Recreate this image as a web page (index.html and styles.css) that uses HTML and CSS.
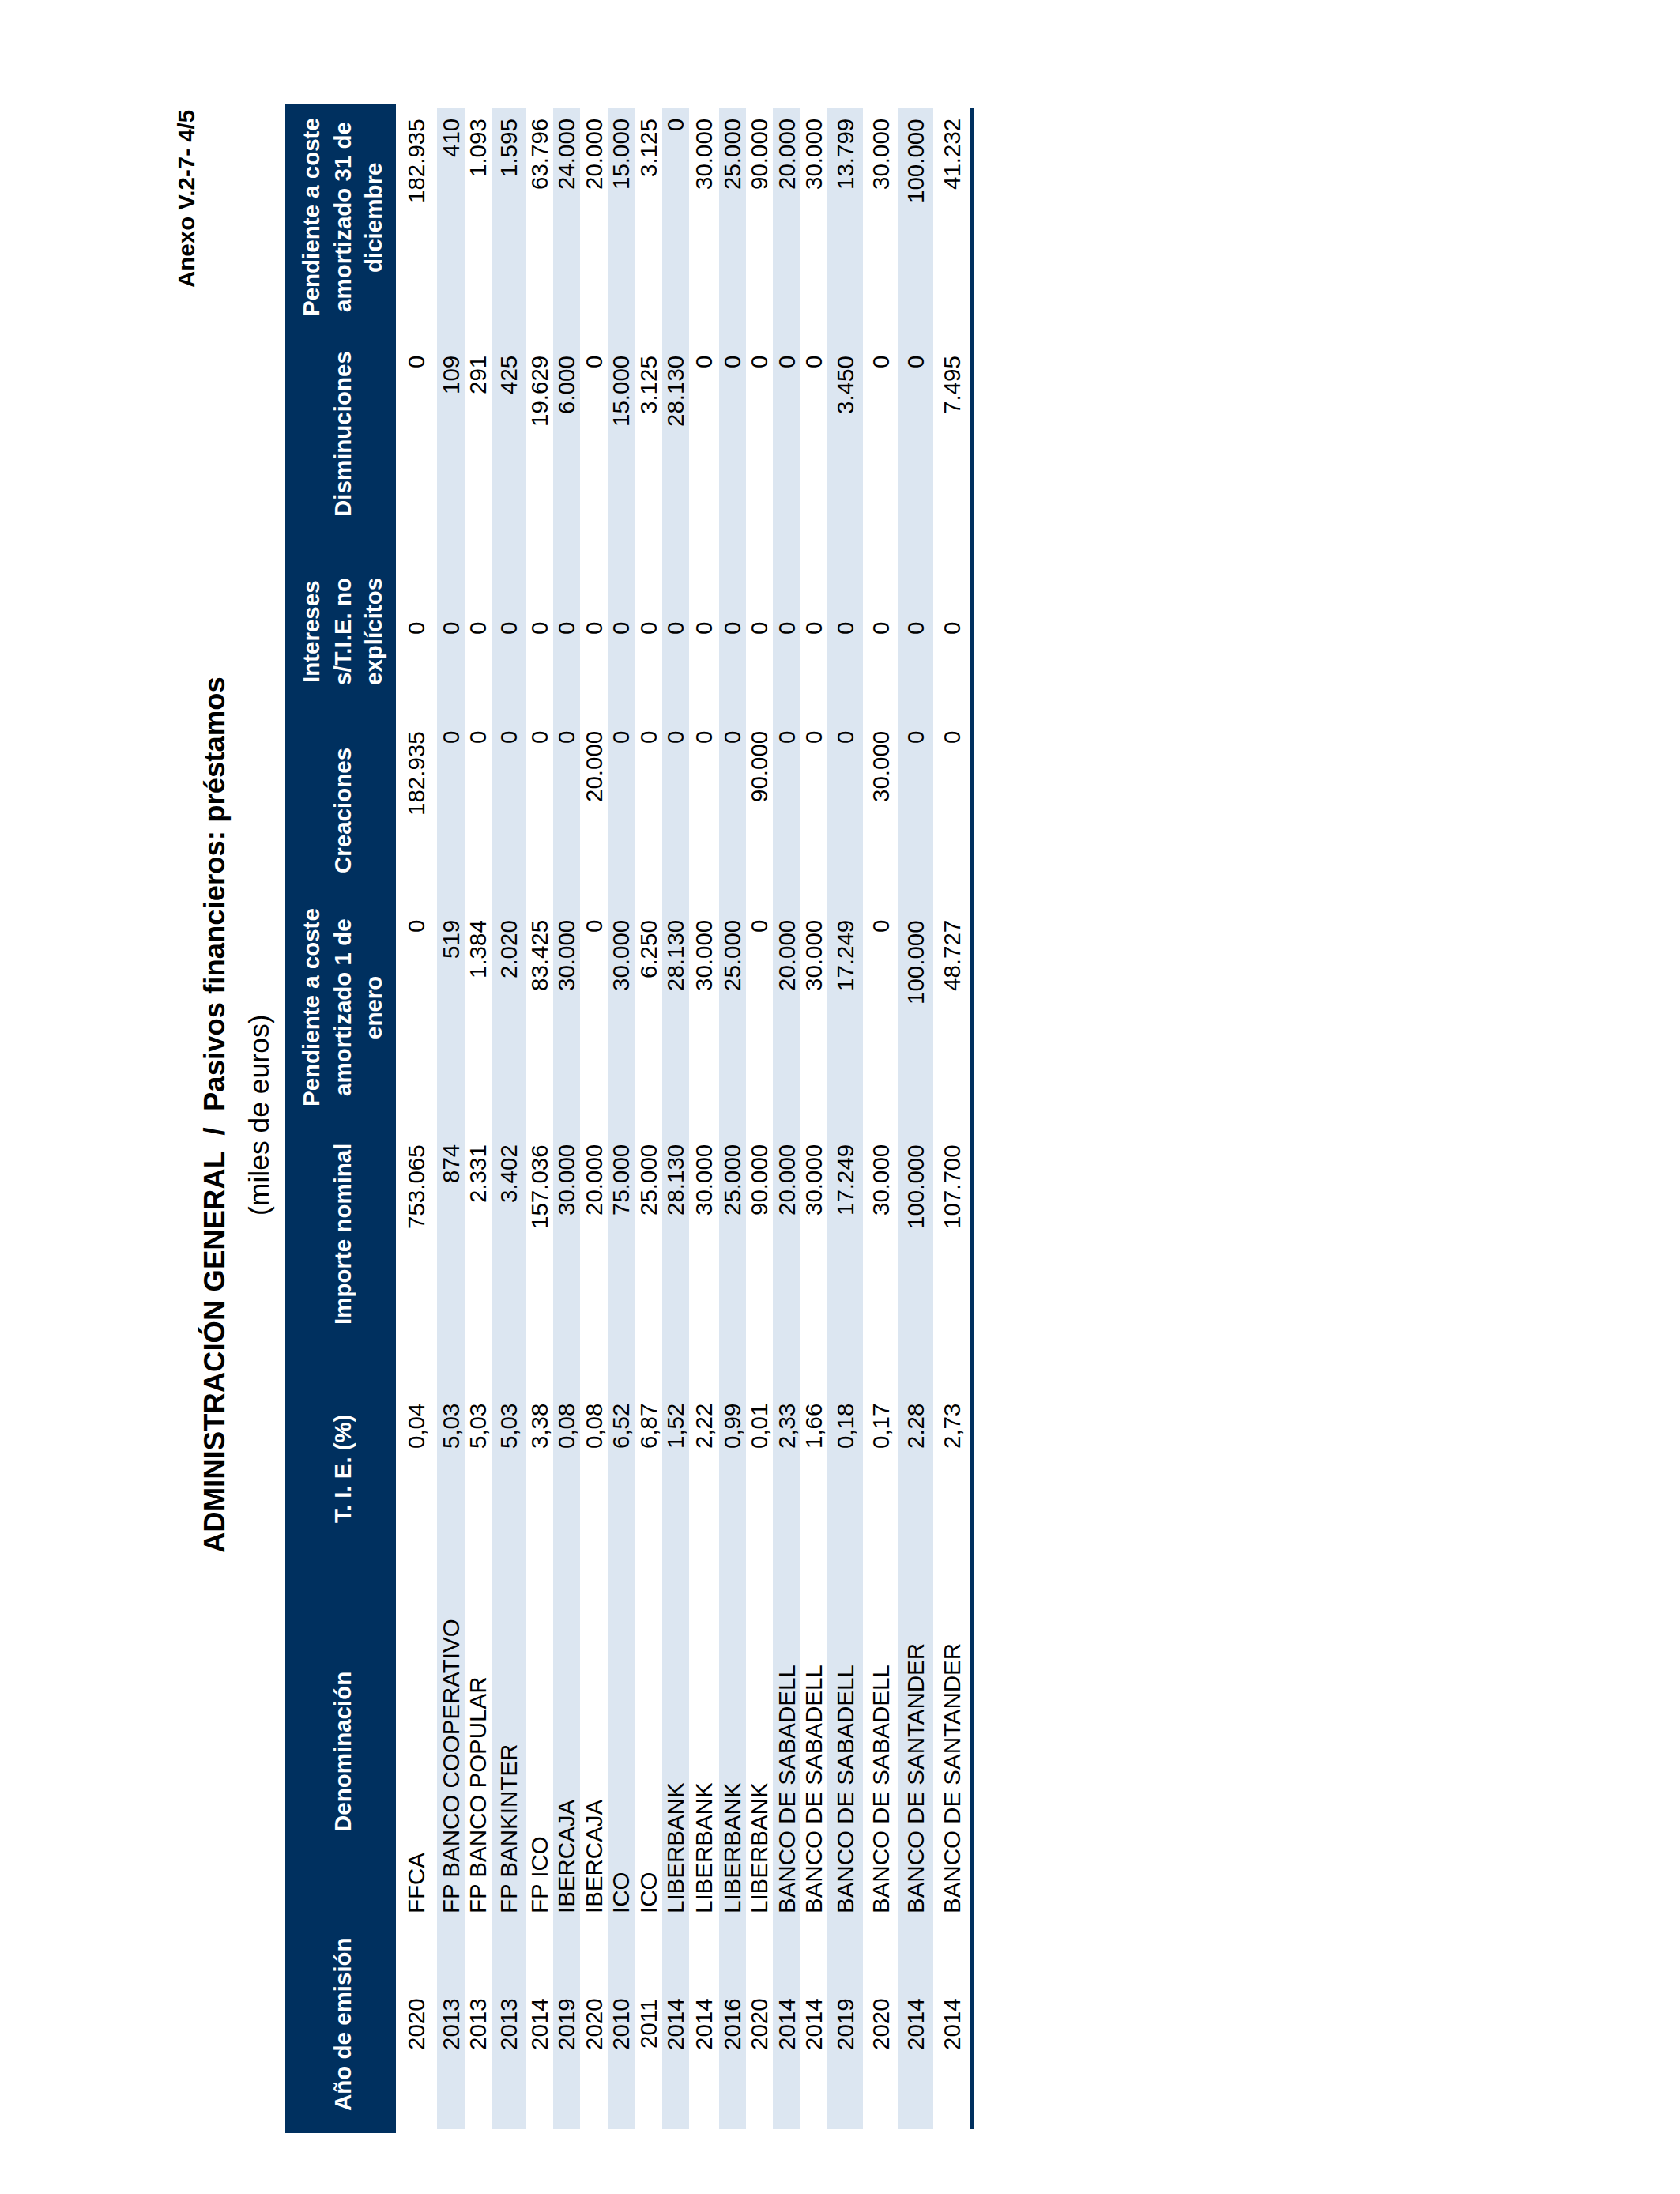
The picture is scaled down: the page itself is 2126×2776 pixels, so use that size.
FILE: index.html
```html
<!DOCTYPE html>
<html lang="es">
<head>
<meta charset="utf-8">
<title>Pasivos financieros: préstamos</title>
<link rel="stylesheet" href="styles.css">
</head>
<body>
<div class="page">
  <div class="sheet">
    <div class="annex">Anexo V.2-7- 4/5</div>
    <h1 class="title">ADMINISTRACIÓN GENERAL  /  Pasivos financieros: préstamos</h1>
    <div class="subtitle">(miles de euros)</div>
    <table class="loans">
      <colgroup>
        <col class="c-year"><col class="c-name"><col class="c-tie"><col class="c-nom"><col class="c-p1"><col class="c-cre"><col class="c-int"><col class="c-dis"><col class="c-p31">
      </colgroup>
      <thead>
        <tr>
          <th>Año de emisión</th>
          <th>Denominación</th>
          <th>T. I. E. (%)</th>
          <th>Importe nominal</th>
          <th>Pendiente a coste<br>amortizado 1 de<br>enero</th>
          <th>Creaciones</th>
          <th>Intereses<br>s/T.I.E. no<br>explícitos</th>
          <th>Disminuciones</th>
          <th>Pendiente a coste<br>amortizado 31 de<br>diciembre</th>
        </tr>
      </thead>
      <tbody>
        <tr class="h52"><td>2020</td><td>FFCA</td><td>0,04</td><td>753.065</td><td>0</td><td>182.935</td><td>0</td><td>0</td><td>182.935</td></tr>
        <tr class="h35"><td>2013</td><td>FP BANCO COOPERATIVO</td><td>5,03</td><td>874</td><td>519</td><td>0</td><td>0</td><td>109</td><td>410</td></tr>
        <tr><td>2013</td><td>FP BANCO POPULAR</td><td>5,03</td><td>2.331</td><td>1.384</td><td>0</td><td>0</td><td>291</td><td>1.093</td></tr>
        <tr class="h44"><td>2013</td><td>FP BANKINTER</td><td>5,03</td><td>3.402</td><td>2.020</td><td>0</td><td>0</td><td>425</td><td>1.595</td></tr>
        <tr><td>2014</td><td>FP ICO</td><td>3,38</td><td>157.036</td><td>83.425</td><td>0</td><td>0</td><td>19.629</td><td>63.796</td></tr>
        <tr><td>2019</td><td>IBERCAJA</td><td>0,08</td><td>30.000</td><td>30.000</td><td>0</td><td>0</td><td>6.000</td><td>24.000</td></tr>
        <tr class="h35"><td>2020</td><td>IBERCAJA</td><td>0,08</td><td>20.000</td><td>0</td><td>20.000</td><td>0</td><td>0</td><td>20.000</td></tr>
        <tr><td>2010</td><td>ICO</td><td>6,52</td><td>75.000</td><td>30.000</td><td>0</td><td>0</td><td>15.000</td><td>15.000</td></tr>
        <tr class="h35"><td>2011</td><td>ICO</td><td>6,87</td><td>25.000</td><td>6.250</td><td>0</td><td>0</td><td>3.125</td><td>3.125</td></tr>
        <tr><td>2014</td><td>LIBERBANK</td><td>1,52</td><td>28.130</td><td>28.130</td><td>0</td><td>0</td><td>28.130</td><td>0</td></tr>
        <tr class="h38"><td>2014</td><td>LIBERBANK</td><td>2,22</td><td>30.000</td><td>30.000</td><td>0</td><td>0</td><td>0</td><td>30.000</td></tr>
        <tr><td>2016</td><td>LIBERBANK</td><td>0,99</td><td>25.000</td><td>25.000</td><td>0</td><td>0</td><td>0</td><td>25.000</td></tr>
        <tr><td>2020</td><td>LIBERBANK</td><td>0,01</td><td>90.000</td><td>0</td><td>90.000</td><td>0</td><td>0</td><td>90.000</td></tr>
        <tr class="h35"><td>2014</td><td>BANCO DE SABADELL</td><td>2,33</td><td>20.000</td><td>20.000</td><td>0</td><td>0</td><td>0</td><td>20.000</td></tr>
        <tr><td>2014</td><td>BANCO DE SABADELL</td><td>1,66</td><td>30.000</td><td>30.000</td><td>0</td><td>0</td><td>0</td><td>30.000</td></tr>
        <tr class="h45"><td>2019</td><td>BANCO DE SABADELL</td><td>0,18</td><td>17.249</td><td>17.249</td><td>0</td><td>0</td><td>3.450</td><td>13.799</td></tr>
        <tr class="h45"><td>2020</td><td>BANCO DE SABADELL</td><td>0,17</td><td>30.000</td><td>0</td><td>30.000</td><td>0</td><td>0</td><td>30.000</td></tr>
        <tr class="h44"><td>2014</td><td>BANCO DE SANTANDER</td><td>2.28</td><td>100.000</td><td>100.000</td><td>0</td><td>0</td><td>0</td><td>100.000</td></tr>
        <tr class="h47"><td>2014</td><td>BANCO DE SANTANDER</td><td>2,73</td><td>107.700</td><td>48.727</td><td>0</td><td>0</td><td>7.495</td><td>41.232</td></tr>
      </tbody>
    </table>
  </div>
</div>
</body>
</html>
```
FILE: styles.css
```css
html, body {
  margin: 0;
  padding: 0;
  background: #ffffff;
}

/* Landscape sheet set in vertical writing mode and turned half a turn,
   so lines read bottom-to-top like the printed page */
.page {
  width: 2126px;
  height: 2776px;
  overflow: hidden;
  writing-mode: vertical-rl;
  text-orientation: sideways;
  transform: rotate(180deg);
  font-family: "Liberation Sans", Arial, sans-serif;
  color: #000000;
}

.sheet {
  margin-inline-start: 77px;
  inline-size: 2567px;
  padding-block-start: 221px;
}

.annex {
  font-size: 29.5px;
  font-weight: bold;
  line-height: 30px;
  text-align: end;
  padding-inline-end: 7px;
}

.title {
  margin: 0;
  margin-block-start: 1px;
  padding-inline-start: 10px;
  font-size: 36.5px;
  font-weight: bold;
  line-height: 40px;
  text-align: center;
  white-space: pre;
}

.subtitle {
  margin-block-start: 16px;
  padding-inline-start: 10px;
  font-size: 35.5px;
  line-height: 40px;
  text-align: center;
}

.loans {
  margin-block-start: 13px;
  margin-inline-start: 4.5px;
  inline-size: 2557.5px;
  table-layout: fixed;
  border-collapse: separate;
  border-spacing: 0;
  border-block-end: 5px solid #00305f;
  font-size: 29.5px;
}

.c-year { inline-size: 267.5px; }
.c-name { inline-size: 421px; }
.c-tie  { inline-size: 296px; }
.c-nom  { inline-size: 298px; }
.c-p1   { inline-size: 274px; }
.c-cre  { inline-size: 225px; }
.c-int  { inline-size: 228px; }
.c-dis  { inline-size: 272px; }
.c-p31  { inline-size: 276px; }

.loans thead tr {
  block-size: 140px;
}

.loans th {
  background: #00305f;
  color: #ffffff;
  font-weight: bold;
  line-height: 39.5px;
  padding: 0;
  padding-block-start: 5px;
  text-align: center;
  vertical-align: middle;
}

/* the header band runs a few pixels past the body columns at both ends
   (offsets are in the unrotated vertical frame: inline-start is physical top) */
.loans th:first-child {
  box-shadow: 0 -5px 0 #00305f;
}

.loans th:last-child {
  box-shadow: 0 5px 0 #00305f;
}

.loans tbody tr {
  block-size: 34px;
}

.loans tbody tr.h35 { block-size: 35px; }
.loans tbody tr.h38 { block-size: 38px; }
.loans tbody tr.h44 { block-size: 44px; }
.loans tbody tr.h45 { block-size: 45px; }
.loans tbody tr.h47 { block-size: 47px; }
.loans tbody tr.h52 { block-size: 52px; }

.loans td {
  padding: 0;
  line-height: 34px;
  vertical-align: middle;
  white-space: nowrap;
  text-align: end;
}

.loans tbody tr:nth-child(even) td {
  background: #dce6f1;
}

.loans td:nth-child(1) { text-align: center; }
.loans td:nth-child(2) { text-align: start; padding-inline-start: 6px; }
.loans td:nth-child(3) { padding-inline-end: 66px; }
.loans td:nth-child(4) { padding-inline-end: 36px; }
.loans td:nth-child(5) { padding-inline-end: 26px; }
.loans td:nth-child(6) { padding-inline-end: 12px; }
.loans td:nth-child(7) { padding-inline-end: 102px; }
.loans td:nth-child(8) { padding-inline-end: 37px; }
.loans td:nth-child(9) { padding-inline-end: 13px; }
```
